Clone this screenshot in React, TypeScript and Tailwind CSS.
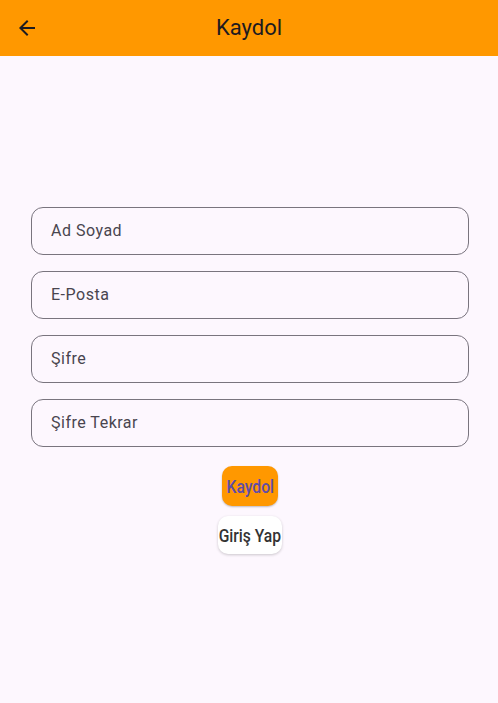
import React from "react";

const fields = ["Ad Soyad", "E-Posta", "Şifre", "Şifre Tekrar"];

export default function App() {
  return (
    <div className="w-[498px] h-[703px] bg-[#fdf7fe] flex flex-col" style={{ fontFamily: "Roboto, 'Noto Sans', sans-serif" }}>
      <header className="h-14 bg-[#ff9800] flex items-center relative shrink-0">
        <div className="absolute left-[15px] top-4 w-6 h-6 flex items-center justify-center">
          <svg width="24" height="24" viewBox="0 0 24 24">
            <path d="M20 11H7.83l5.59-5.59L12 4l-8 8 8 8 1.41-1.41L7.83 13H20v-2z" fill="#1d1b20" />
          </svg>
        </div>
        <h1 className="w-full text-center text-[22px] text-[#1d1b20] leading-7">Kaydol</h1>
      </header>
      <main className="flex flex-col items-center pt-[151px] pl-[31px] pr-[29px]">
        <div className="w-full flex flex-col gap-4">
          {fields.map((f) => (
            <div key={f} className="h-12 w-full rounded-xl border border-[#79747e] flex items-center pl-[19px] text-base text-[#49454f] tracking-[0.5px]">
              {f}
            </div>
          ))}
        </div>
        <button className="mt-[19px] w-14 h-10 rounded-[10px] bg-[#ff9800] text-[#5e4ca8] text-[18px] font-medium flex items-center justify-center shadow-[0_1px_2px_rgba(0,0,0,0.25)]">
          <span className="inline-block scale-x-[0.87] whitespace-nowrap">Kaydol</span>
        </button>
        <button className="mt-[10px] w-16 h-[38px] rounded-[10px] bg-white text-[#333] text-[18px] font-medium flex items-center justify-center whitespace-nowrap shadow-[0_1px_3px_rgba(0,0,0,0.2)]">
          <span className="inline-block scale-x-[0.87] whitespace-nowrap">Giriş Yap</span>
        </button>
      </main>
    </div>
  );
}
